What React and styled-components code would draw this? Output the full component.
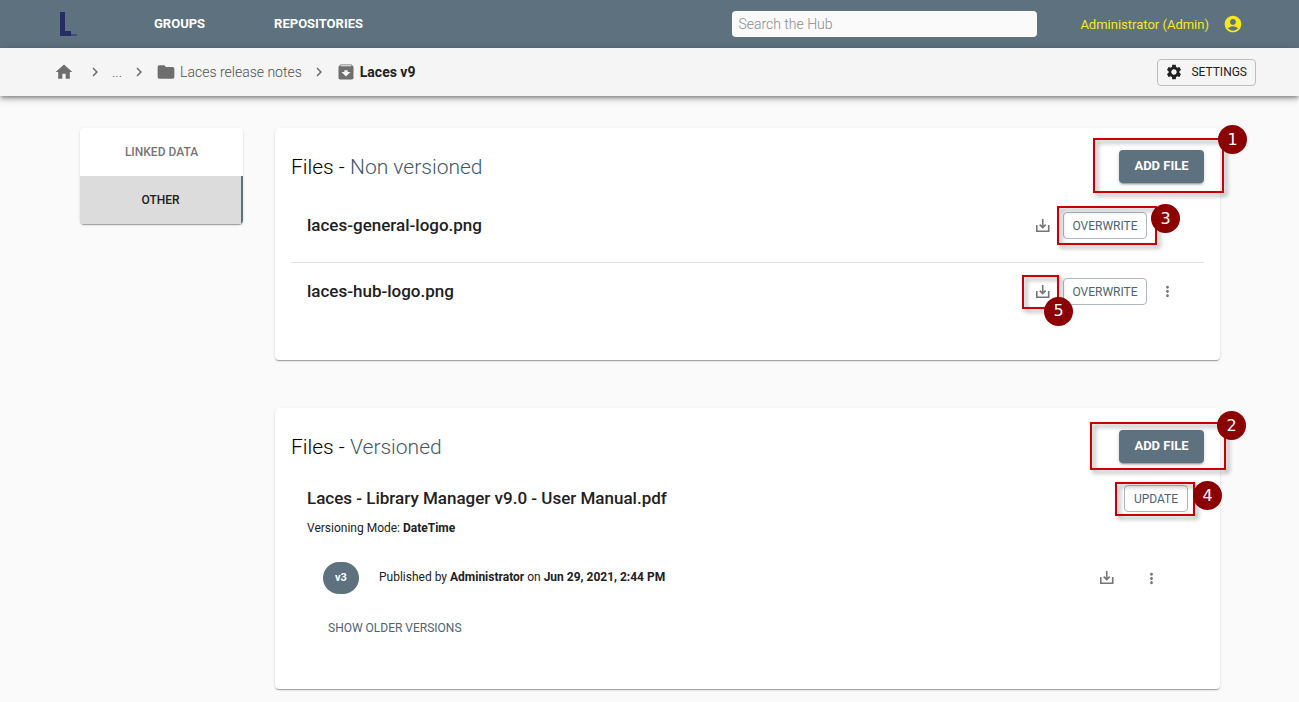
import React, { useState } from 'react';
import styled, { createGlobalStyle } from 'styled-components';
import {
  MdAccountCircle,
  MdArchive,
  MdChevronRight,
  MdFolder,
  MdHome,
  MdMoreVert,
  MdSettings,
} from 'react-icons/md';

const GlobalStyle = createGlobalStyle`
  * {
    box-sizing: border-box;
  }

  body {
    margin: 0;
    background: #fafafa;
    color: #212121;
    font-family: Roboto, "Liberation Sans", sans-serif;
    font-size: 12px;
    line-height: 16px;
  }

  button, input {
    font-family: inherit;
  }
`;

// Top bar
const TopBar = styled.header`
  display: flex;
  align-items: center;
  height: 48px;
  padding: 0 56px 0 60px;
  background: #5d717e;
`;

const Logo = styled.a`
  display: flex;
  width: 94px;
`;

const Nav = styled.nav`
  display: flex;
  gap: 69px;
  flex: 1;
`;

const NavLink = styled.a`
  color: #fff;
  font-size: 13px;
  font-weight: 700;
  text-decoration: none;
`;

const Search = styled.input`
  width: 305px;
  height: 26px;
  margin-right: 43px;
  padding: 0 6px;
  border: 0;
  border-radius: 4px;
  background: #fafafa;
  color: #212121;
  font-size: 14px;
  font-weight: 300;

  &::placeholder {
    color: #8c8c8c;
    opacity: 1;
  }
`;

const Account = styled.button`
  display: flex;
  align-items: center;
  gap: 14px;
  padding: 0;
  border: 0;
  background: none;
  color: #f8e71c;
  font-size: 13px;
  cursor: pointer;
`;

// Breadcrumb bar
const CrumbBar = styled.div`
  position: relative;
  display: flex;
  align-items: center;
  justify-content: space-between;
  height: 48px;
  padding: 0 43px 0 54px;
  background: #f5f5f5;
  box-shadow: 0 2px 4px -1px rgba(0, 0, 0, 0.4), 0 4px 5px rgba(0, 0, 0, 0.14),
    0 1px 10px rgba(0, 0, 0, 0.12);
`;

const Crumbs = styled.nav`
  display: flex;
  align-items: center;
  gap: 8px;
  color: #6e6e6e;
`;

const Crumb = styled.a`
  display: flex;
  align-items: center;
  gap: 4px;
  color: ${({ $current }) => ($current ? '#212121' : '#505050')};
  font-size: 14px;
  font-weight: ${({ $current }) => ($current ? 700 : 300)};
  text-decoration: none;

  &:first-child {
    margin-right: 4px;
  }

  svg {
    color: #6e6e6e;
  }
`;

const SettingsButton = styled.button`
  display: flex;
  align-items: center;
  gap: 8px;
  height: 27px;
  padding: 0 8px 0 7px;
  border: 1px solid #bdbdbd;
  border-radius: 4px;
  background: transparent;
  color: #212121;
  font-size: 12px;
  cursor: pointer;
`;

// Page body
const Page = styled.main`
  display: grid;
  grid-template-columns: 163px minmax(0, 1fr);
  align-items: start;
  gap: 32px;
  padding: 32px 79px 13px 80px;
`;

const paper = `
  border-radius: 4px;
  background: #fff;
  box-shadow: 0 2px 1px -1px rgba(0, 0, 0, 0.2), 0 1px 1px rgba(0, 0, 0, 0.14),
    0 1px 3px rgba(0, 0, 0, 0.12);
`;

const Tabs = styled.div`
  ${paper}
  display: flex;
  flex-direction: column;
  overflow: hidden;
`;

const Tab = styled.button`
  height: 48px;
  padding: 0;
  border: 0;
  border-right: ${({ $active }) => ($active ? '2px solid #5d717e' : '0')};
  background: ${({ $active }) => ($active ? '#dcdcdc' : '#fff')};
  color: ${({ $active }) => ($active ? '#212121' : '#757575')};
  font-size: 12px;
  font-weight: 500;
  cursor: pointer;
`;

const Cards = styled.div`
  display: grid;
  gap: 48px;
`;

const Card = styled.section`
  ${paper}
  padding: 22px 16px 32px;
`;

const CardHeader = styled.div`
  display: flex;
  align-items: center;
  justify-content: space-between;
  margin-bottom: 14px;
`;

const Title = styled.h2`
  margin: 0;
  color: #000;
  font-size: 21px;
  font-weight: 300;
  line-height: 24px;

  span {
    color: #40596a;
  }
`;

const PrimaryButton = styled.button`
  width: 85px;
  height: 33px;
  padding: 0 0 2px;
  border: 0;
  border-radius: 4px;
  background: #5d717e;
  color: #fff;
  font-size: 13px;
  font-weight: 700;
  box-shadow: 0 3px 1px -2px rgba(0, 0, 0, 0.2), 0 2px 2px rgba(0, 0, 0, 0.14),
    0 1px 5px rgba(0, 0, 0, 0.12);
  cursor: pointer;
`;

const OutlineButton = styled.button`
  width: ${({ $wide }) => ($wide ? '84px' : '64px')};
  height: 27px;
  padding: 0;
  border: 1px solid #aeb8be;
  border-radius: 4px;
  background: transparent;
  color: #4d6472;
  font-size: 12px;
  cursor: pointer;
`;

const IconButton = styled.button`
  display: grid;
  place-items: center;
  width: 24px;
  height: 24px;
  padding: 0;
  border: 0;
  background: none;
  color: #757575;
  cursor: pointer;
`;

const FileList = styled.ul`
  margin: 0;
  padding: 0;
  list-style: none;
`;

const FileItem = styled.li`
  display: flex;
  align-items: flex-start;
  justify-content: space-between;
  padding: 15px 25px 23px 16px;

  & + & {
    border-top: 1px solid #e0e0e0;
  }
`;

const FileName = styled.h3`
  margin: 0;
  font-size: 17px;
  font-weight: 500;
  line-height: 26px;
`;

const FileActions = styled.div`
  display: grid;
  grid-template-columns: 24px 84px 24px;
  align-items: center;
  gap: 8px;
`;

const Document = styled.article`
  padding: 8px 16px 16px;
`;

const DocumentHeader = styled.div`
  display: flex;
  align-items: flex-start;
  justify-content: space-between;
`;

const Mode = styled.p`
  margin: 8px 0 26px;
`;

const Strong = styled.strong`
  font-weight: 700;
`;

const Version = styled.div`
  display: flex;
  align-items: center;
  padding: 0 25px 0 16px;
`;

const VersionBadge = styled.span`
  display: grid;
  place-items: center;
  width: 36px;
  height: 32px;
  margin-right: 20px;
  border-radius: 16px;
  background: #5d717e;
  color: #fff;
  font-size: 11px;
  font-weight: 700;
`;

const VersionText = styled.p`
  flex: 1;
  margin: 0 0 2px;
`;

const VersionActions = styled.div`
  display: flex;
  gap: 20px;
`;

const TextButton = styled.button`
  height: 27px;
  margin: 20px 0 0 16px;
  padding: 0 5px;
  border: 0;
  background: none;
  color: #4d6472;
  font-size: 12px;
  cursor: pointer;
`;

// Numbered highlights drawn over a control
const Marked = styled.div`
  position: relative;
  display: grid;
`;

const Frame = styled.span`
  position: absolute;
  inset: ${({ $inset }) => $inset};
  z-index: 1;
  border: 2px solid #c80000;
  filter: drop-shadow(3px 3px 2px rgba(0, 0, 0, 0.4));
  pointer-events: none;
`;

const Number = styled.span`
  position: absolute;
  top: ${({ $top }) => $top};
  right: ${({ $right }) => $right};
  z-index: 2;
  display: grid;
  place-items: center;
  width: 29px;
  height: 29px;
  border-radius: 50%;
  background: #8b0000;
  color: #fff;
  font-family: "DejaVu Sans", sans-serif;
  font-size: 16px;
  pointer-events: none;
`;

const Callout = ({ number, inset, top, right, children }) => (
  <Marked>
    {children}
    <Frame $inset={inset} />
    <Number $top={top} $right={right}>{number}</Number>
  </Marked>
);

const DownloadIcon = () => (
  <svg width="14" height="14" viewBox="0 0 14 14" fill="none" stroke="currentColor" strokeWidth="1.6">
    <path d="M.8 6v6.2h11.9V6" />
    <path d="M6.7 0v8.6M3.7 5.6l3 3 3-3" />
  </svg>
);

const Download = () => (
  <IconButton aria-label="Download">
    <DownloadIcon />
  </IconButton>
);

const More = () => (
  <IconButton aria-label="More">
    <MdMoreVert size={17} />
  </IconButton>
);

const App = () => {
  const [tab, setTab] = useState('OTHER');

  return (
    <>
      <GlobalStyle />
      <TopBar>
        <Logo href="#" aria-label="Laces">
          <svg width="17" height="24" viewBox="0 0 17 24">
            <path d="M0 0h5v19h6v5H0z" fill="#272c66" />
            <path d="M11 22h6v2h-6z" fill="#3f4f7d" />
          </svg>
        </Logo>
        <Nav>
          <NavLink href="#">GROUPS</NavLink>
          <NavLink href="#">REPOSITORIES</NavLink>
        </Nav>
        <Search type="search" placeholder="Search the Hub" aria-label="Search the Hub" />
        <Account>
          Administrator (Admin)
          <MdAccountCircle size={20} />
        </Account>
      </TopBar>

      <CrumbBar>
        <Crumbs aria-label="Breadcrumb">
          <Crumb href="#" aria-label="Home"><MdHome size={20} /></Crumb>
          <MdChevronRight size={18} />
          <Crumb href="#">...</Crumb>
          <MdChevronRight size={18} />
          <Crumb href="#"><MdFolder size={20} />Laces release notes</Crumb>
          <MdChevronRight size={18} />
          <Crumb href="#" $current><MdArchive size={20} />Laces v9</Crumb>
        </Crumbs>
        <SettingsButton>
          <MdSettings size={18} />
          SETTINGS
        </SettingsButton>
      </CrumbBar>

      <Page>
        <Tabs>
          {['LINKED DATA', 'OTHER'].map((name) => (
            <Tab key={name} $active={tab === name} onClick={() => setTab(name)}>{name}</Tab>
          ))}
        </Tabs>

        <Cards>
          <Card>
            <CardHeader>
              <Title>Files - <span>Non versioned</span></Title>
              <Callout number={1} inset="-12px -20px -10px -26px" top="-25px" right="-43px">
                <PrimaryButton>ADD FILE</PrimaryButton>
              </Callout>
            </CardHeader>
            <FileList>
              <FileItem>
                <FileName>laces-general-logo.png</FileName>
                <FileActions>
                  <Download />
                  <Callout number={3} inset="-6px -10px -6px -6px" top="-8px" right="-33px">
                    <OutlineButton $wide>OVERWRITE</OutlineButton>
                  </Callout>
                </FileActions>
              </FileItem>
              <FileItem>
                <FileName>laces-hub-logo.png</FileName>
                <FileActions>
                  <Callout number={5} inset="-5px -4px -5px -9px" top="17px" right="-18px">
                    <Download />
                  </Callout>
                  <OutlineButton $wide>OVERWRITE</OutlineButton>
                  <More />
                </FileActions>
              </FileItem>
            </FileList>
          </Card>

          <Card>
            <CardHeader>
              <Title>Files - <span>Versioned</span></Title>
              <Callout number={2} inset="-8px -22px -7px -29px" top="-19px" right="-42px">
                <PrimaryButton>ADD FILE</PrimaryButton>
              </Callout>
            </CardHeader>
            <Document>
              <DocumentHeader>
                <FileName>Laces - Library Manager v9.0 - User Manual.pdf</FileName>
                <Callout number={4} inset="-3px -7px -4px -9px" top="-4px" right="-34px">
                  <OutlineButton>UPDATE</OutlineButton>
                </Callout>
              </DocumentHeader>
              <Mode>Versioning Mode: <Strong>DateTime</Strong></Mode>
              <Version>
                <VersionBadge>v3</VersionBadge>
                <VersionText>
                  Published by <Strong>Administrator</Strong> on <Strong>Jun 29, 2021, 2:44 PM</Strong>
                </VersionText>
                <VersionActions>
                  <Download />
                  <More />
                </VersionActions>
              </Version>
              <TextButton>SHOW OLDER VERSIONS</TextButton>
            </Document>
          </Card>
        </Cards>
      </Page>
    </>
  );
};

export default App;
